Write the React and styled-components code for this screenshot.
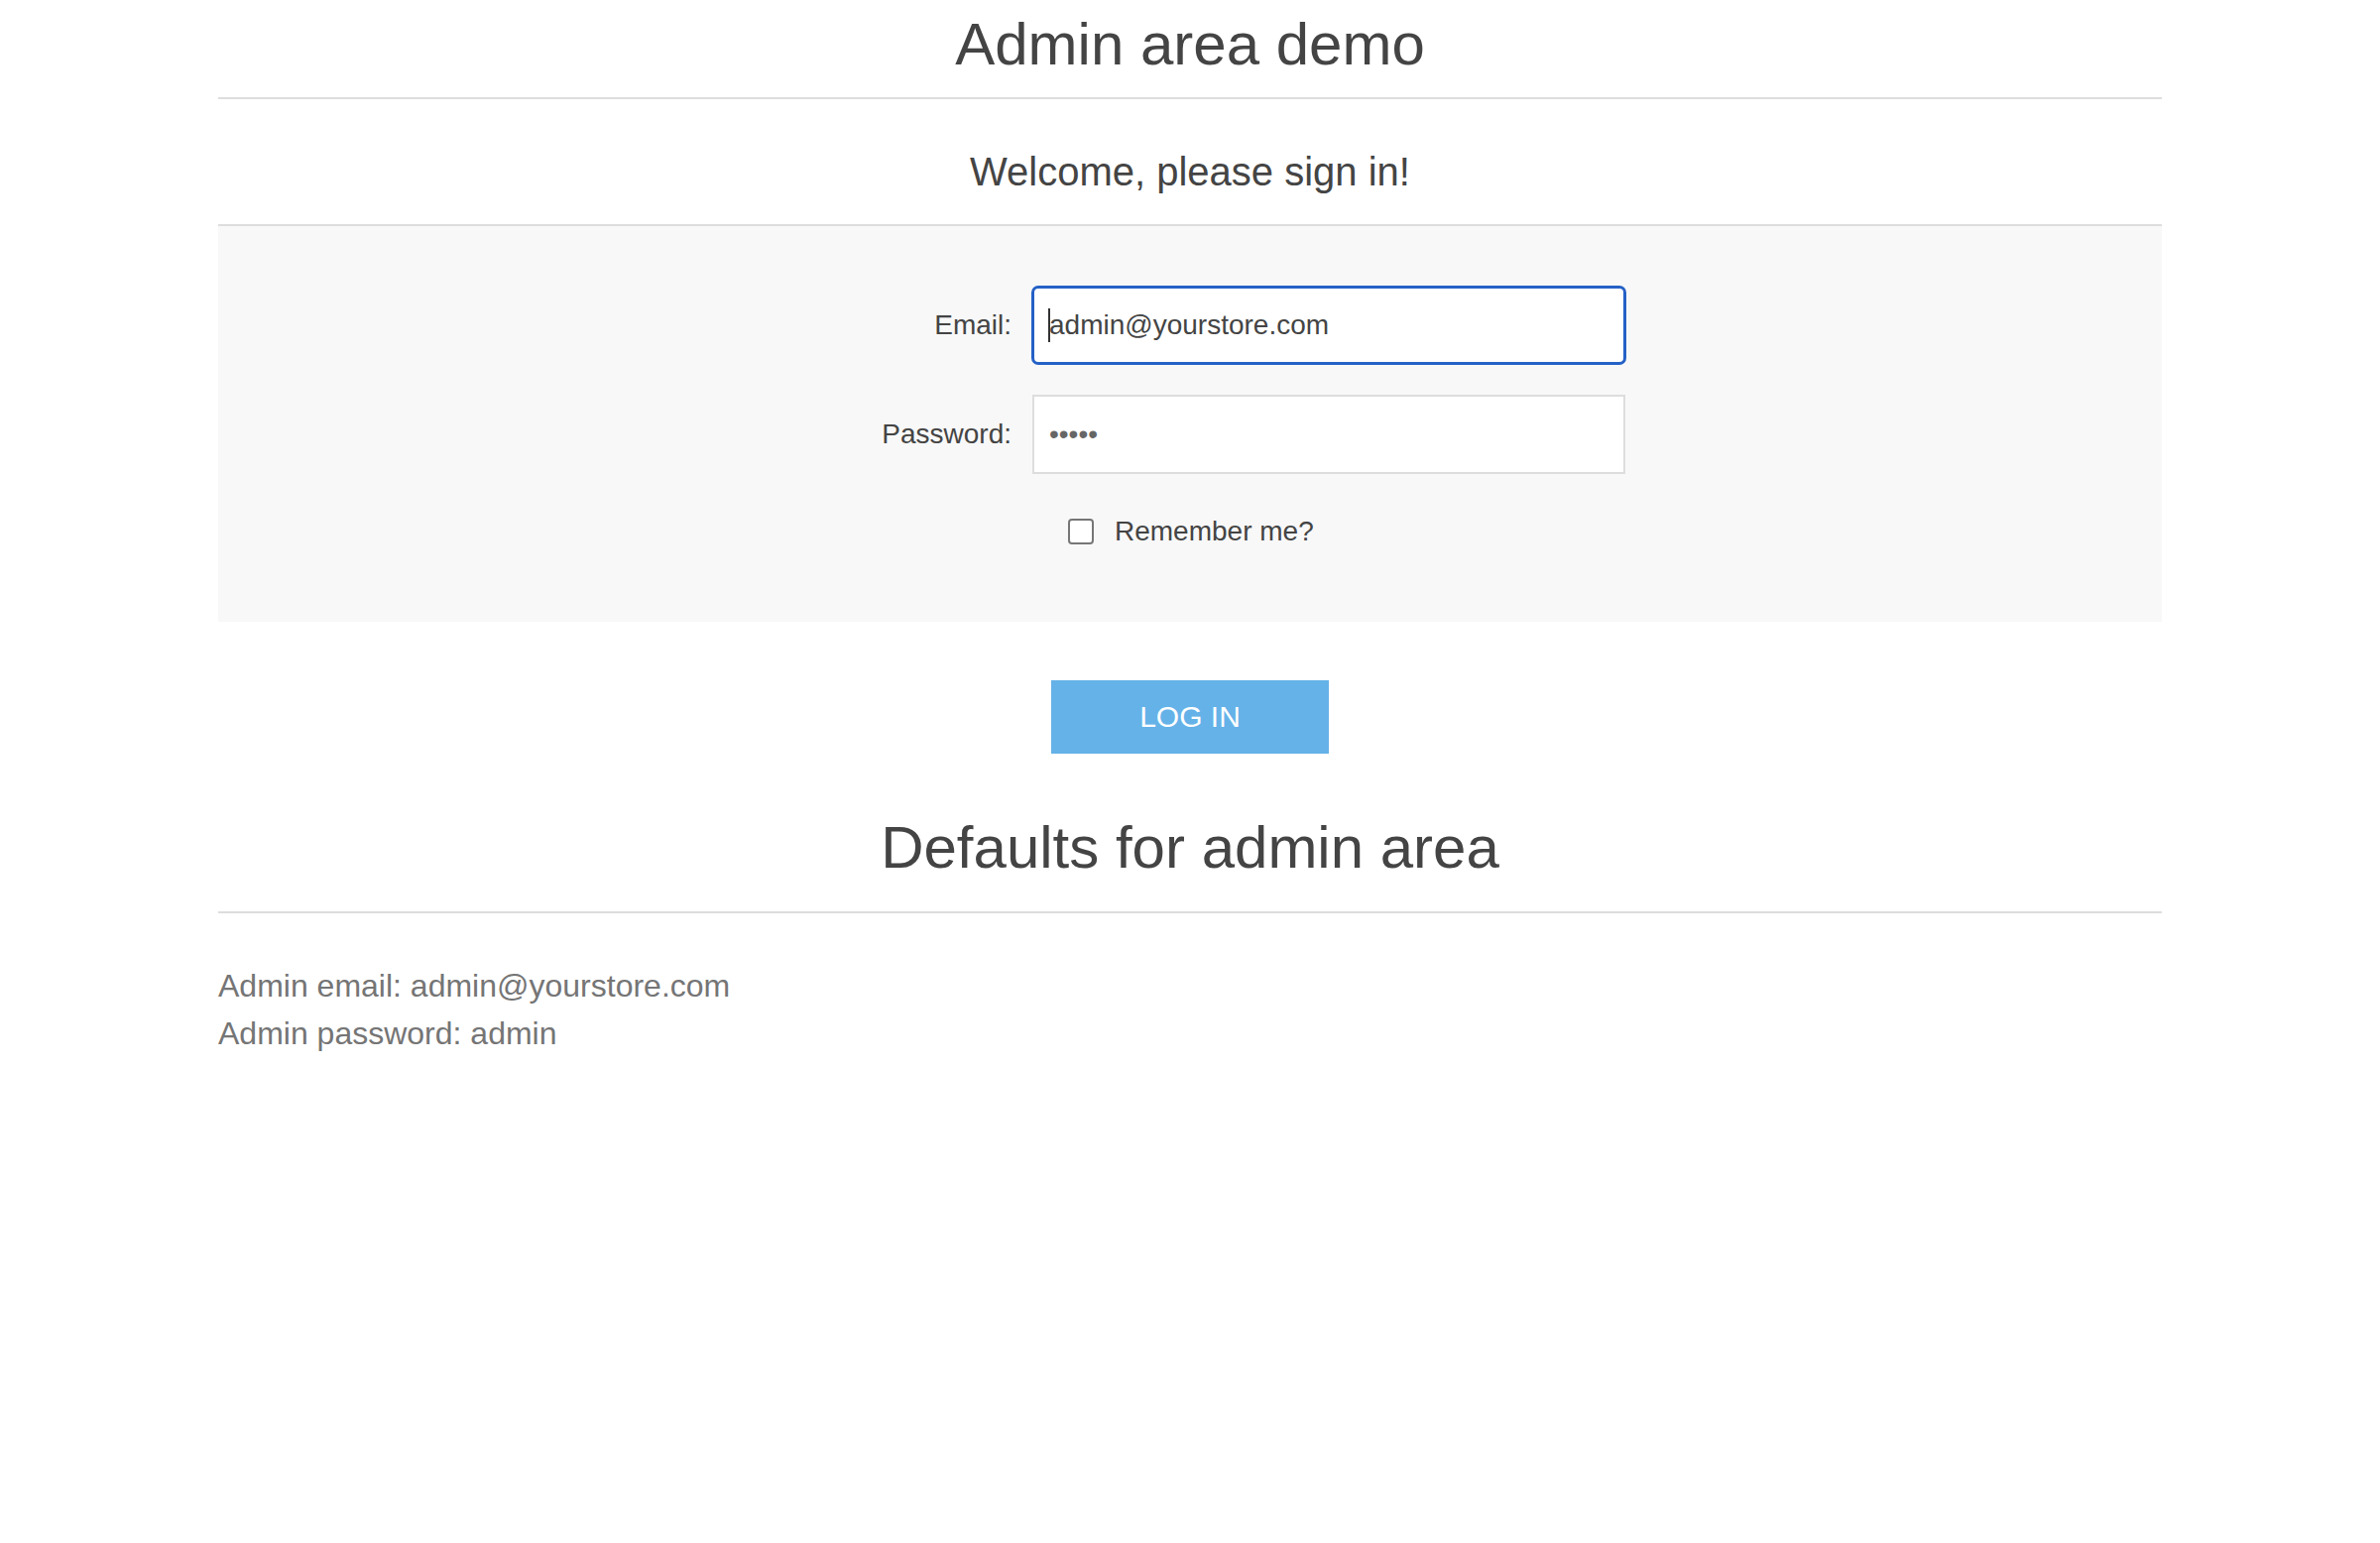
import React from "react";
import styled, { createGlobalStyle } from "styled-components";

const GlobalStyle = createGlobalStyle`
  html, body {
    margin: 0;
    padding: 0;
    background: #ffffff;
    font-family: "Liberation Sans", Arial, Helvetica, sans-serif;
    color: #444444;
  }
`;

const Page = styled.div`
  width: 1960px;
  margin: 0 auto;
`;

const Title = styled.h1`
  margin: 12px 0 0;
  padding-bottom: 20px;
  border-bottom: 2px solid #dddddd;
  font-size: 60px;
  line-height: 66px;
  font-weight: normal;
  text-align: center;
  color: #444444;
`;

const SubTitle = styled.h2`
  margin: 0;
  padding: 50px 0 30px;
  border-bottom: 2px solid #dddddd;
  font-size: 40px;
  line-height: 46px;
  font-weight: normal;
  text-align: center;
  color: #444444;
`;

const Panel = styled.div`
  background: #f8f8f8;
  padding: 61px 0 71px;
  display: grid;
  grid-template-columns: 800px 598px;
  column-gap: 21px;
  row-gap: 31px;
  align-items: center;
`;

const Label = styled.label`
  font-size: 28px;
  color: #444444;
  text-align: right;
`;

const Field = styled.div`
  position: relative;
`;

const Input = styled.input`
  box-sizing: border-box;
  display: block;
  width: 100%;
  height: ${(p) => (p.$focused ? "78px" : "80px")};
  margin: 0;
  padding: 0 15px;
  font-family: "Liberation Sans", Arial, sans-serif;
  font-size: 28px;
  color: ${(p) => (p.$dots ? "#666666" : "#444444")};
  background: #ffffff;
  border: 2px solid ${(p) => (p.$focused ? "#2561c6" : "#dddddd")};
  border-radius: ${(p) => (p.$focused ? "6px" : "0")};
  box-shadow: ${(p) => (p.$focused ? "0 0 0 1px #2561c6" : "none")};
  outline: none;
`;

const Caret = styled.span`
  position: absolute;
  left: 16px;
  top: 22px;
  width: 2px;
  height: 34px;
  background: #333333;
`;

const RememberRow = styled.div`
  grid-column: 2;
  margin-top: 7px;
  height: 40px;
  display: flex;
  align-items: center;
  gap: 21px;
  padding-left: 36px;
`;

const Checkbox = styled.input`
  appearance: none;
  box-sizing: border-box;
  width: 26px;
  height: 26px;
  margin: 0;
  border: 2px solid #767676;
  border-radius: 4px;
  background: #ffffff;
`;

const CheckLabel = styled.label`
  font-size: 28px;
  color: #444444;
`;

const Actions = styled.div`
  display: flex;
  justify-content: center;
  padding-top: 59px;
`;

const LoginButton = styled.button`
  width: 280px;
  height: 74px;
  border: none;
  background: #65b2e8;
  color: #ffffff;
  font-family: "Liberation Sans", Arial, sans-serif;
  font-size: 30px;
  text-transform: uppercase;
  cursor: pointer;
`;

const SectionTitle = styled.h1`
  margin: 62px 0 0;
  padding-bottom: 31px;
  border-bottom: 2px solid #dddddd;
  font-size: 60px;
  line-height: 66px;
  font-weight: normal;
  text-align: center;
  color: #444444;
`;

const Notes = styled.div`
  padding-top: 49px;
  font-size: 32px;
  line-height: 48px;
  color: #757575;
`;

export default function App() {
  return (
    <>
      <GlobalStyle />
      <Page>
        <Title>Admin area demo</Title>
        <SubTitle>Welcome, please sign in!</SubTitle>
        <Panel>
          <Label htmlFor="email">Email:</Label>
          <Field>
            <Input id="email" type="text" $focused defaultValue="admin@yourstore.com" readOnly />
            <Caret />
          </Field>
          <Label htmlFor="password">Password:</Label>
          <Field>
            <Input id="password" type="text" $dots defaultValue="•••••" readOnly />
          </Field>
          <RememberRow>
            <Checkbox id="remember" type="checkbox" />
            <CheckLabel htmlFor="remember">Remember me?</CheckLabel>
          </RememberRow>
        </Panel>
        <Actions>
          <LoginButton>Log in</LoginButton>
        </Actions>
        <SectionTitle>Defaults for admin area</SectionTitle>
        <Notes>
          <div>Admin email: admin@yourstore.com</div>
          <div>Admin password: admin</div>
        </Notes>
      </Page>
    </>
  );
}
